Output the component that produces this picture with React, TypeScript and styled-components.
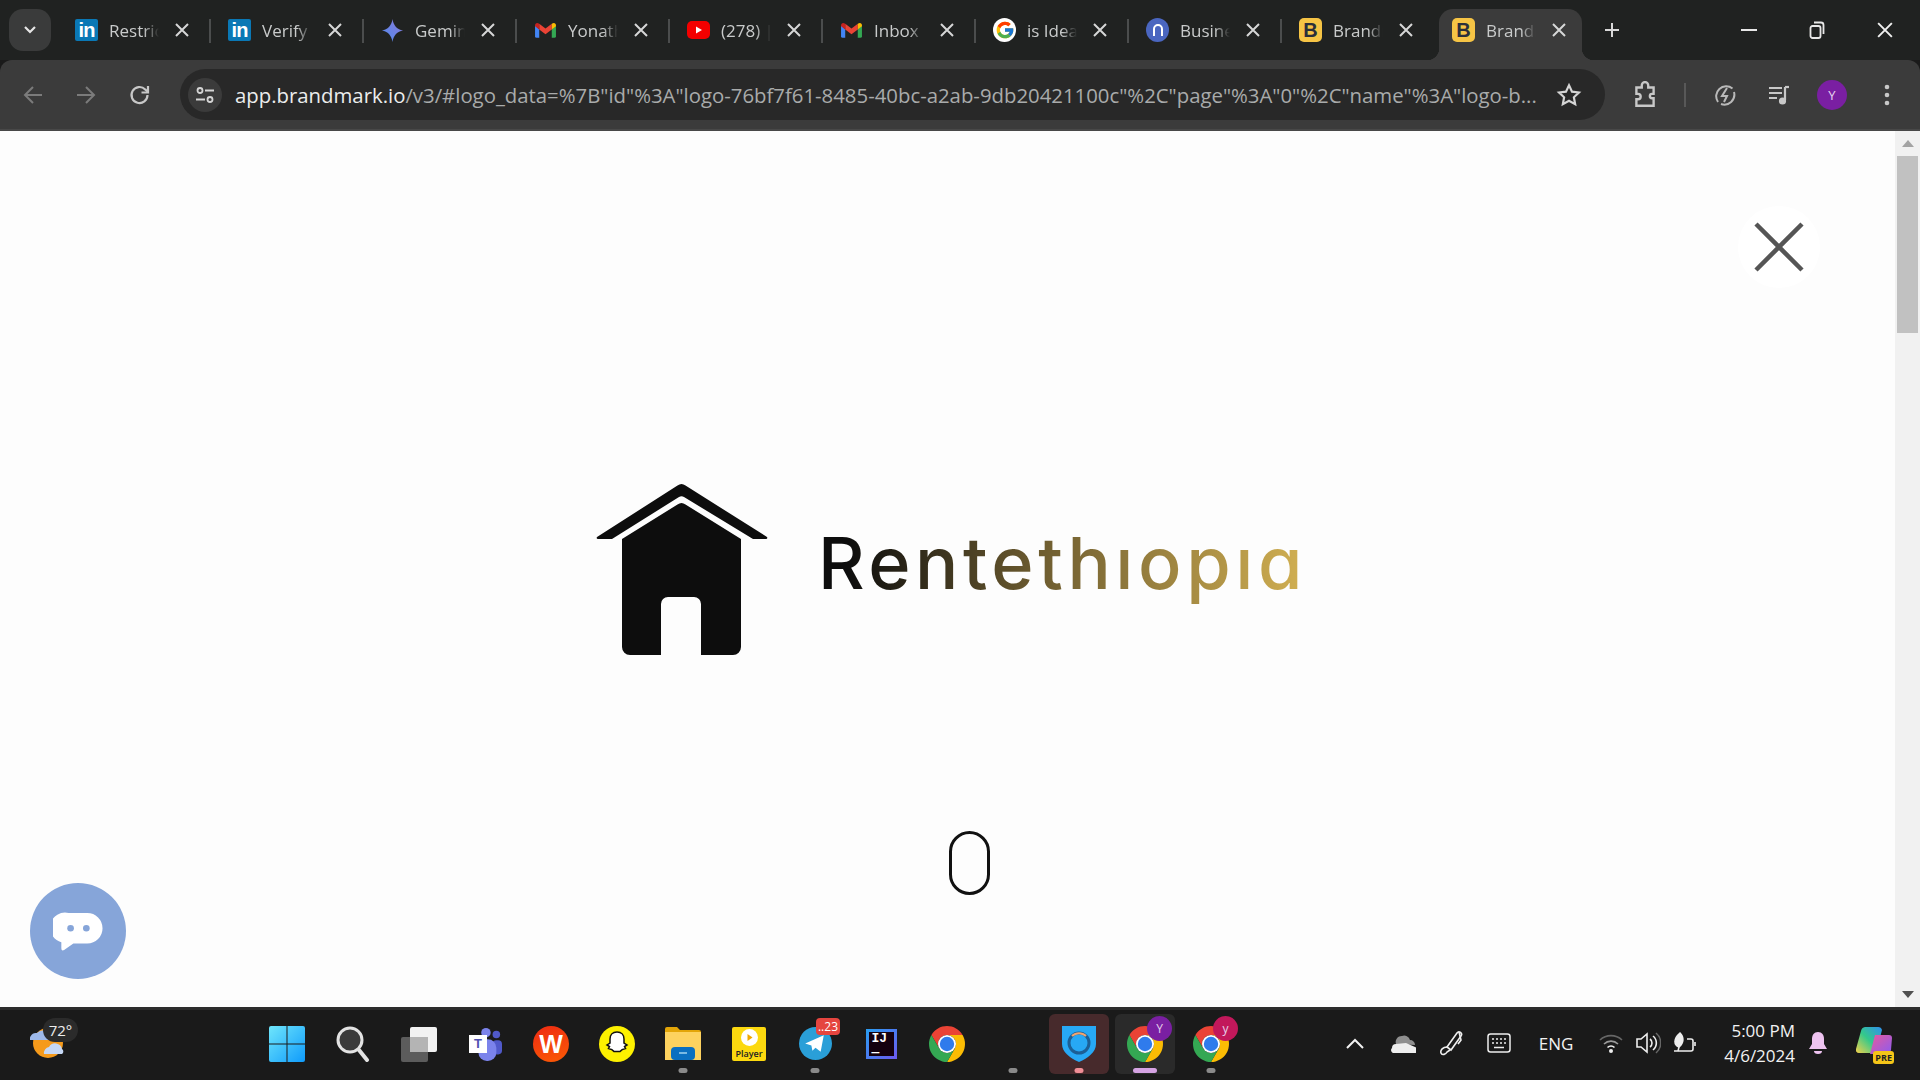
import React from 'react'
import styled, { createGlobalStyle } from 'styled-components'
import { FcGoogle } from 'react-icons/fc'

const GlobalStyle = createGlobalStyle`
  html, body {
    margin: 0;
    padding: 0;
    overflow: hidden;
    background: #1a1a1a;
  }
  * {
    box-sizing: border-box;
  }
`

const Screen = styled.div`
  width: 1920px;
  height: 1080px;
  display: flex;
  flex-direction: column;
  font-family: 'Open Sans', 'Noto Sans', sans-serif;
  overflow: hidden;
`

/* ---------- tab strip ---------- */

const TabStrip = styled.div`
  height: 60px;
  background: #202221;
  display: flex;
  align-items: flex-start;
  padding-left: 9px;
  flex: none;
`

const TabSearch = styled.div`
  width: 42px;
  height: 42px;
  margin: 9px 6px 0 0;
  border-radius: 14px;
  background: #3a3b3b;
  display: flex;
  align-items: center;
  justify-content: center;
  flex: none;
`

const Tab = styled.div<{ $active?: boolean; $divider?: boolean }>`
  position: relative;
  width: ${({ $active }) => ($active ? '143px' : '153px')};
  height: 51px;
  margin: 9px ${({ $active }) => ($active ? '5px' : '0')} 0 ${({ $active }) => ($active ? '5px' : '0')};
  padding: 0 0 9px ${({ $active }) => ($active ? '13px' : '18px')};
  display: flex;
  align-items: center;
  flex: none;
  color: #c9cbcb;
  font-size: 17px;
  border-radius: 14px 14px 0 0;
  background: ${({ $active }) => ($active ? '#3b3b3b' : 'transparent')};

  &::after {
    content: '';
    display: ${({ $divider }) => ($divider ? 'block' : 'none')};
    position: absolute;
    right: -1px;
    top: 10px;
    width: 2px;
    height: 24px;
    background: #4b4d4d;
  }

  ${({ $active }) =>
    $active
      ? `
    &::before {
      content: '';
      position: absolute;
      left: -12px;
      right: -12px;
      bottom: 0;
      height: 12px;
      background:
        radial-gradient(circle at 0 0, transparent 12px, #3b3b3b 12.5px) left bottom / 12px 12px no-repeat,
        radial-gradient(circle at 100% 0, transparent 12px, #3b3b3b 12.5px) right bottom / 12px 12px no-repeat;
    }
  `
      : ''}
`

const TabIcon = styled.span`
  width: 23px;
  height: 23px;
  flex: none;
  display: flex;
  align-items: center;
  justify-content: center;
  margin-right: 11px;
`

const TabTitle = styled.span`
  width: 50px;
  flex: none;
  overflow: hidden;
  white-space: nowrap;
  -webkit-mask-image: linear-gradient(90deg, #000 70%, transparent 100%);
  mask-image: linear-gradient(90deg, #000 70%, transparent 100%);
`

const TabClose = styled.span`
  width: 14px;
  height: 14px;
  margin-left: 16px;
  display: flex;
  flex: none;
`

const LinkedInMark = styled.span`
  width: 23px;
  height: 22px;
  background: #0a78b5;
  border-radius: 2px;
  color: #fff;
  font: bold 20px/22px 'Liberation Sans', sans-serif;
  text-align: center;
  letter-spacing: -1px;
`

const BrandMark = styled.span`
  width: 24px;
  height: 24px;
  border-radius: 5px;
  background: #f6c445;
  color: #2b2f3a;
  font: bold 20px/24px 'Liberation Sans', sans-serif;
  text-align: center;
`

const NotionMark = styled.span`
  width: 24px;
  height: 24px;
  border-radius: 50%;
  background: #4a66c0;
  display: flex;
  align-items: center;
  justify-content: center;
`

const GoogleMark = styled.span`
  width: 24px;
  height: 24px;
  border-radius: 50%;
  background: #fff;
  display: flex;
  align-items: center;
  justify-content: center;
`

const NewTab = styled.div`
  width: 30px;
  height: 30px;
  margin: 15px 0 0 10px;
  display: flex;
  align-items: center;
  justify-content: center;
  flex: none;
`

const WindowControls = styled.div`
  margin-left: auto;
  display: flex;
  height: 60px;
  align-items: center;
  padding-right: 1px;
`

const WindowButton = styled.div`
  width: 68px;
  height: 60px;
  display: flex;
  align-items: center;
  justify-content: center;
`

/* ---------- toolbar ---------- */

const Toolbar = styled.div`
  height: 71px;
  background: #3b3b3b;
  border-bottom: 2px solid #484848;
  border-radius: 12px 12px 0 0;
  display: flex;
  align-items: flex-start;
  padding: 9px 0 0 6px;
  flex: none;
`

const NavButton = styled.div<{ $w?: number }>`
  width: ${({ $w }) => $w ?? 53}px;
  height: 51px;
  display: flex;
  align-items: center;
  justify-content: center;
  flex: none;
`

const Omnibox = styled.div`
  width: 1425px;
  height: 51px;
  margin-left: 12px;
  border-radius: 26px;
  background: #282828;
  display: flex;
  align-items: center;
  padding: 0 23px 0 8px;
  flex: none;
`

const SiteInfo = styled.div`
  width: 34px;
  height: 34px;
  border-radius: 50%;
  background: #3b3b3b;
  display: flex;
  align-items: center;
  justify-content: center;
  flex: none;
  margin-right: 13px;
`

const Url = styled.div`
  flex: 1;
  min-width: 0;
  color: #a9abab;
  font-size: 20.35px;
  white-space: nowrap;
  overflow: hidden;

  b {
    font-weight: 400;
    color: #eceded;
  }
`

const ToolDivider = styled.div`
  width: 2px;
  height: 24px;
  margin-top: 14px;
  background: #585858;
  flex: none;
`

const Avatar = styled.div`
  width: 30px;
  height: 30px;
  border-radius: 50%;
  background: #7a1fa2;
  color: #e8d5f0;
  font-size: 13px;
  display: flex;
  align-items: center;
  justify-content: center;
`

/* ---------- page ---------- */

const Main = styled.div`
  flex: 1;
  min-height: 0;
  display: flex;
`

const Page = styled.div`
  position: relative;
  flex: 1;
  background: #fdfdfd;
  display: flex;
  flex-direction: column;
  align-items: center;
  padding-top: 353px;
`

const CloseButton = styled.div`
  position: absolute;
  top: 75px;
  right: 75px;
  width: 82px;
  height: 82px;
  border-radius: 50%;
  background: #fff;
  display: flex;
  align-items: center;
  justify-content: center;
`

const Logo = styled.div`
  display: flex;
  align-items: flex-start;
  gap: 50px;
  margin-left: 8px;
`

const Wordmark = styled.div`
  font-family: Inter, 'Open Sans', sans-serif;
  font-feature-settings: 'cv11' 1;
  font-weight: 500;
  font-size: 72px;
  line-height: 88px;
  letter-spacing: 4.6px;
  margin-top: 35px;
  white-space: nowrap;
  color: transparent;
  background: linear-gradient(90deg, #0d0d0d 0%, #0d0d0d 6%, #6d5c30 45%, #d2b052 100%);
  -webkit-background-clip: text;
  background-clip: text;
`

const ScrollHint = styled.div`
  width: 41px;
  height: 64px;
  margin: 175px 0 0 43px;
  border: 3.5px solid #111;
  border-radius: 21px;
`

const ChatBubble = styled.div`
  position: absolute;
  left: 30px;
  bottom: 28px;
  width: 96px;
  height: 96px;
  border-radius: 50%;
  background: #86a5d9;
  display: flex;
  align-items: center;
  justify-content: center;
`

const Scrollbar = styled.div`
  width: 25px;
  background: #f1f1f1;
  display: flex;
  flex-direction: column;
  align-items: center;
  flex: none;
`

const ScrollArrow = styled.div`
  height: 25px;
  display: flex;
  align-items: center;
  justify-content: center;
  flex: none;
`

const ScrollThumb = styled.div`
  width: 21px;
  height: 177px;
  background: #c1c1c1;
  flex: none;
`

const ScrollTrack = styled.div`
  flex: 1;
`

/* ---------- taskbar ---------- */

const Taskbar = styled.div`
  height: 73px;
  background: #1a1a1a;
  border-top: 3px solid #2d2d2d;
  display: flex;
  align-items: stretch;
  flex: none;
`

const WeatherSlot = styled.div`
  position: relative;
  width: 254px;
  padding: 13px 0 0 30px;
  flex: none;
`

const WeatherBadge = styled.span`
  position: absolute;
  left: 43px;
  top: 8px;
  width: 35px;
  height: 24px;
  border-radius: 12px;
  background: #2b2b2b;
  color: #eee;
  font-size: 15px;
  line-height: 24px;
  text-align: center;
`

const Apps = styled.div`
  display: flex;
  flex: none;
`

const AppSlot = styled.div<{ $bg?: string }>`
  position: relative;
  width: 66px;
  display: flex;
  align-items: center;
  justify-content: center;
  padding-bottom: 3px;

  &::before {
    content: '';
    display: ${({ $bg }) => ($bg ? 'block' : 'none')};
    position: absolute;
    left: 3px;
    right: 3px;
    top: 4px;
    bottom: 6px;
    border-radius: 6px;
    background: ${({ $bg }) => $bg};
  }

  > * {
    position: relative;
  }
`

const RunDot = styled.span<{ $color?: string; $wide?: boolean }>`
  position: absolute !important;
  bottom: 7px;
  left: 50%;
  transform: translateX(-50%);
  width: ${({ $wide }) => ($wide ? '24px' : '9px')};
  height: 5px;
  border-radius: 3px;
  background: ${({ $color }) => $color ?? '#8a8a8a'};
`

const Badge = styled.span<{ $color: string }>`
  position: absolute !important;
  top: 6px;
  right: 6px;
  width: 25px;
  height: 25px;
  border-radius: 50%;
  background: ${({ $color }) => $color};
  color: #e6d0ea;
  font-size: 12px;
  line-height: 25px;
  text-align: center;
`

const CountBadge = styled.span`
  position: absolute !important;
  top: 8px;
  right: 8px;
  height: 17px;
  padding: 0 2px;
  border-radius: 4px;
  background: #e5453f;
  color: #fff;
  font-size: 12px;
  line-height: 17px;
`

const Wps = styled.span`
  width: 36px;
  height: 36px;
  border-radius: 50%;
  background: linear-gradient(160deg, #ee2a12, #fb5b05);
  color: #fff;
  font: 900 25px/36px 'Liberation Sans', sans-serif;
  text-align: center;
`

const PlayerTile = styled.span`
  width: 34px;
  height: 34px;
  border-radius: 2px;
  background: #fcd90f;
  color: #222;
  font-size: 9px;
  font-weight: 600;
  display: flex;
  flex-direction: column;
  align-items: center;
  justify-content: flex-end;
  padding-bottom: 1px;
  gap: 1px;
`

const IdeaTile = styled.span`
  width: 31px;
  height: 30px;
  border: 3px solid;
  border-image: linear-gradient(135deg, #2b9bf0, #6a5cf0) 1;
  background: #14000f;
  color: #fff;
  font: bold 13px/14px 'Liberation Mono', monospace;
  padding-left: 3px;
`

const TeamsTag = styled.span`
  position: absolute !important;
  left: 17px;
  top: 25px;
  width: 18px;
  height: 18px;
  background: #fff;
  color: #4f52b2;
  font: bold 13px/18px 'Liberation Sans', sans-serif;
  text-align: center;
`

const Spacer = styled.div`
  flex: 1;
`

const Tray = styled.div`
  display: flex;
  align-items: stretch;
  padding-right: 13px;
  flex: none;
`

const TrayItem = styled.div<{ $w: number }>`
  width: ${({ $w }) => $w}px;
  display: flex;
  align-items: center;
  justify-content: center;
  color: #f2f2f2;
  font-size: 17px;
  flex: none;
  padding-bottom: 4px;
`

const Clock = styled.div`
  width: 91px;
  display: flex;
  flex-direction: column;
  align-items: flex-end;
  justify-content: center;
  color: #f2f2f2;
  font-size: 17px;
  line-height: 25px;
  padding-bottom: 4px;
  white-space: nowrap;
  flex: none;
`

const CopilotWrap = styled.div`
  position: relative;
  width: 36px;
  height: 36px;
`

const PreTag = styled.span`
  position: absolute;
  right: -2px;
  bottom: -3px;
  height: 13px;
  padding: 0 2px;
  border-radius: 3px;
  background: #f5c518;
  color: #222;
  font-size: 9px;
  font-weight: 700;
  line-height: 13px;
`

/* ---------- drawings ---------- */

const XIcon = ({ size = 14, color = '#d6d7d7', width = 2 }: { size?: number; color?: string; width?: number }) => (
  <svg width={size} height={size} viewBox="0 0 14 14">
    <path d="M1 1l12 12M13 1L1 13" stroke={color} strokeWidth={width} fill="none" />
  </svg>
)

const Gmail = ({ size = 23 }: { size?: number }) => (
  <svg width={size} height={size} viewBox="1 3 22 18" preserveAspectRatio="xMidYMid meet">
    <path d="M2 7v10.5A1.5 1.5 0 0 0 3.5 19H6v-8z" fill="#4285f4" />
    <path d="M22 7v10.5a1.5 1.5 0 0 1-1.5 1.5H18v-8z" fill="#34a853" />
    <path d="M6 11V5.500L12 10l6-4.500V11l-6 4.500z" fill="#ea4335" />
    <path d="M2 7a2.200 2.200 0 0 1 3.500-1.800L6 5.500V11L2 8z" fill="#c5221f" />
    <path d="M22 7a2.200 2.200 0 0 0-3.500-1.800L18 5.500V11l4-3z" fill="#fbbc04" />
  </svg>
)

const Gemini = () => (
  <svg width={23} height={23} viewBox="0 0 24 24">
    <defs>
      <linearGradient id="gem" x1="0" y1="1" x2="1" y2="0">
        <stop offset="0" stopColor="#4f8df0" />
        <stop offset="1" stopColor="#8b78d8" />
      </linearGradient>
    </defs>
    <path d="M12 0c1 7 5 11 11 12-6 1-10 5-11 12-1-7-5-11-11-12 6-1 10-5 11-12z" fill="url(#gem)" />
  </svg>
)

const YouTube = () => (
  <svg width={23} height={18} viewBox="0 0 23 18">
    <rect width="23" height="18" rx="5" fill="#f40000" />
    <path d="M9 5.500l6 3.500-6 3.500z" fill="#fff" />
  </svg>
)

const Chrome = ({ size = 36 }: { size?: number }) => (
  <svg width={size} height={size} viewBox="4 4 40 40">
    <path d="M6.680 14A20 20 0 0 1 41.320 14H24A10 10 0 0 0 15.340 29Z" fill="#ea4335" />
    <path d="M41.320 14A20 20 0 0 1 24 44L32.660 29A10 10 0 0 0 24 14Z" fill="#fbbc04" />
    <path d="M24 44A20 20 0 0 1 6.680 14L15.340 29A10 10 0 0 0 32.660 29Z" fill="#34a853" />
    <circle cx="24" cy="24" r="10" fill="#fff" />
    <circle cx="24" cy="24" r="8" fill="#2f7bec" />
  </svg>
)

const tabs = [
  { icon: <LinkedInMark>in</LinkedInMark>, title: 'Restrictions' },
  { icon: <LinkedInMark>in</LinkedInMark>, title: 'Verify' },
  { icon: <Gemini />, title: 'Gemini' },
  { icon: <Gmail />, title: 'Yonathan' },
  { icon: <YouTube />, title: '(278) | YouTube' },
  { icon: <Gmail />, title: 'Inbox' },
  { icon: <GoogleMark><FcGoogle size={20} /></GoogleMark>, title: 'is Ideal' },
  {
    icon: (
      <NotionMark>
        <svg width={12} height={14} viewBox="0 0 12 14">
          <path d="M2 13V6a4 4 0 0 1 8 0v7" stroke="#fff" strokeWidth="2" fill="none" />
        </svg>
      </NotionMark>
    ),
    title: 'Business'
  },
  { icon: <BrandMark>B</BrandMark>, title: 'Brandmark' }
]

const App = () => (
  <Screen>
    <GlobalStyle />
    <TabStrip>
      <TabSearch>
        <svg width={14} height={10} viewBox="0 0 14 10">
          <path d="M2 2l5 5 5-5" stroke="#e6e6e6" strokeWidth="2.200" fill="none" />
        </svg>
      </TabSearch>
      {tabs.map((tab, i) => (
        <Tab key={i} $divider={i < tabs.length - 1}>
          <TabIcon>{tab.icon}</TabIcon>
          <TabTitle>{tab.title}</TabTitle>
          <TabClose><XIcon /></TabClose>
        </Tab>
      ))}
      <Tab $active>
        <TabIcon><BrandMark>B</BrandMark></TabIcon>
        <TabTitle>Brandmark</TabTitle>
        <TabClose><XIcon /></TabClose>
      </Tab>
      <NewTab>
        <svg width={16} height={16} viewBox="0 0 16 16">
          <path d="M8 1v14M1 8h14" stroke="#d9d9d9" strokeWidth="2" />
        </svg>
      </NewTab>
      <WindowControls>
        <WindowButton>
          <svg width={16} height={4} viewBox="0 0 16 4"><path d="M0 2h16" stroke="#e8e8e8" strokeWidth="2" /></svg>
        </WindowButton>
        <WindowButton>
          <svg width={16} height={18} viewBox="0 0 16 18" fill="none" stroke="#e8e8e8" strokeWidth="1.800">
            <rect x="1.500" y="5" width="10" height="12" rx="2" />
            <path d="M5 1.500h7a2.500 2.500 0 0 1 2.500 2.500V13" />
          </svg>
        </WindowButton>
        <WindowButton><XIcon size={16} color="#f0f0f0" width={1.7} /></WindowButton>
      </WindowControls>
    </TabStrip>

    <Toolbar>
      <NavButton>
        <svg width={22} height={22} viewBox="0 0 22 22" fill="none" stroke="#7b7b7b" strokeWidth="2">
          <path d="M20 11H3M11 3l-8 8 8 8" />
        </svg>
      </NavButton>
      <NavButton>
        <svg width={22} height={22} viewBox="0 0 22 22" fill="none" stroke="#7b7b7b" strokeWidth="2">
          <path d="M2 11h17M11 3l8 8-8 8" />
        </svg>
      </NavButton>
      <NavButton $w={56}>
        <svg width={24} height={24} viewBox="0 0 24 24" fill="none" stroke="#c8c8c8" strokeWidth="2.200">
          <path d="M19.500 12a8 8 0 1 1-2.300-5.600L20 9" />
          <path d="M20 3v6.500h-6.500" />
        </svg>
      </NavButton>
      <Omnibox>
        <SiteInfo>
          <svg width={20} height={18} viewBox="0 0 20 18" fill="none" stroke="#d5d5d5" strokeWidth="1.800">
            <circle cx="5" cy="4.500" r="2.500" />
            <path d="M10 4.500h9M1 13.500h9" />
            <circle cx="15" cy="13.500" r="2.500" />
          </svg>
        </SiteInfo>
        <Url>
          <b>app.brandmark.io</b>/v3/#logo_data=%7B"id"%3A"logo-76bf7f61-8485-40bc-a2ab-9db20421100c"%2C"page"%3A"0"%2C"name"%3A"logo-b...
        </Url>
        <svg width={26} height={26} viewBox="0 0 24 24" fill="none" stroke="#d5d5d5" strokeWidth="2" style={{ flex: 'none' }}>
          <path d="M12 3l2.800 5.900 6.400.8-4.700 4.400 1.200 6.400-5.700-3.100-5.700 3.100 1.200-6.400-4.700-4.400 6.400-.8z" />
        </svg>
      </Omnibox>
      <NavButton $w={79}>
        <svg width={26} height={28} viewBox="0 0 24 26" fill="none" stroke="#c8c8c8" strokeWidth="2.200">
          <path d="M4 6h5V4a3 3 0 0 1 6 0v2h5v6h-1.500a2 2 0 0 0 0 4H20v7H4v-6h1.500a2.500 2.500 0 0 0 0-5H4z" />
        </svg>
      </NavButton>
      <ToolDivider />
      <NavButton $w={78}>
        <svg width={24} height={24} viewBox="0 0 24 24" fill="none" stroke="#b9b9b9" strokeWidth="2">
          <path d="M5 19A10 10 0 0 1 19.500 5.500M21 9a10 10 0 0 1-13 12" />
          <path d="M14 5l-5 8h5l-3 6" />
        </svg>
      </NavButton>
      <NavButton $w={30}>
        <svg width={24} height={24} viewBox="0 0 24 24" fill="none" stroke="#c8c8c8" strokeWidth="2.200">
          <path d="M2 5h13M2 10h13M2 15h8M18 4v13" />
          <circle cx="15.500" cy="18" r="2.500" fill="#c8c8c8" />
          <path d="M18 4h4" />
        </svg>
      </NavButton>
      <NavButton $w={76}><Avatar>Y</Avatar></NavButton>
      <NavButton $w={34}>
        <svg width={6} height={22} viewBox="0 0 6 22" fill="#c8c8c8">
          <circle cx="3" cy="3" r="2.300" />
          <circle cx="3" cy="11" r="2.300" />
          <circle cx="3" cy="19" r="2.300" />
        </svg>
      </NavButton>
    </Toolbar>

    <Main>
      <Page>
        <CloseButton>
          <svg width={50} height={50} viewBox="0 0 50 50">
            <path d="M2 2l46 46M48 2L2 48" stroke="#555" strokeWidth="4.500" />
          </svg>
        </CloseButton>
        <Logo>
          <svg width={172} height={172} viewBox="0 0 172 172">
            <path d="M85.500 0q2 0 4 1.500L171 53q1 1.500-1 2h-13L88 13q-2.500-1.500-5 0L16 55H2q-2-.5-1-2L81.500 1.500q2-1.500 4-1.500z" fill="#0d0d0d" />
            <path d="M85.500 19q2 0 4 1.500L145 55v108a8 8 0 0 1-8 8h-32v-51a7 7 0 0 0-7-7H72a7 7 0 0 0-7 7v51H34a8 8 0 0 1-8-8V55L81.500 20.500q2-1.500 4-1.500z" fill="#0d0d0d" />
          </svg>
          <Wordmark>Rentethıopıa</Wordmark>
        </Logo>
        <ScrollHint />
        <ChatBubble>
          <svg width={50} height={41} viewBox="0 0 54 44">
            <path d="M17 2h20a16 16 0 0 1 0 33H22L12 42q-3 1.500-3-2v-6.500A16 16 0 0 1 17 2z" fill="#fff" />
            <circle cx="19" cy="18.500" r="3.600" fill="#86a5d9" />
            <circle cx="36" cy="18.500" r="3.600" fill="#86a5d9" />
          </svg>
        </ChatBubble>
      </Page>
      <Scrollbar>
        <ScrollArrow>
          <svg width={12} height={7} viewBox="0 0 12 7"><path d="M6 0l6 7H0z" fill="#a3a3a3" /></svg>
        </ScrollArrow>
        <ScrollThumb />
        <ScrollTrack />
        <ScrollArrow>
          <svg width={12} height={7} viewBox="0 0 12 7"><path d="M0 0h12L6 7z" fill="#505050" /></svg>
        </ScrollArrow>
      </Scrollbar>
    </Main>

    <Taskbar>
      <WeatherSlot>
        <svg width={36} height={38} viewBox="0 0 36 38">
          <circle cx="18" cy="20" r="15" fill="#f59a1b" />
          <path d="M0 17a6 6 0 0 1 7-7 7 7 0 0 1 12 2v5z" fill="#9db8e8" />
          <path d="M14 31a6 6 0 0 1 5-7 7 7 0 0 1 13 2 3 3 0 0 1 0 5z" fill="#c6d8f5" />
        </svg>
        <WeatherBadge>72°</WeatherBadge>
      </WeatherSlot>
      <Apps>
        <AppSlot>
          <svg width={36} height={36} viewBox="0 0 36 36">
            <defs>
              <linearGradient id="win" x1="0" y1="0" x2="1" y2="1">
                <stop offset="0" stopColor="#6fe6fb" />
                <stop offset="1" stopColor="#0f9bfb" />
              </linearGradient>
            </defs>
            <path d="M2 0h15.500v17.500H0V2a2 2 0 0 1 2-2zM18.500 0H34a2 2 0 0 1 2 2v15.500H18.500zM0 18.500h17.500V36H2a2 2 0 0 1-2-2zM18.500 18.500H36V34a2 2 0 0 1-2 2H18.500z" fill="url(#win)" />
          </svg>
        </AppSlot>
        <AppSlot>
          <svg width={34} height={36} viewBox="0 0 34 36" fill="none">
            <circle cx="14" cy="14" r="12" fill="#3b3b3b" stroke="#e3e3e3" strokeWidth="3" />
            <path d="M23 24l8 10" stroke="#e3e3e3" strokeWidth="4" strokeLinecap="round" />
          </svg>
        </AppSlot>
        <AppSlot>
          <svg width={36} height={36} viewBox="0 0 36 36">
            <rect x="0" y="11" width="27" height="25" rx="2" fill="#5c5c5c" />
            <rect x="9" y="1" width="27" height="25" rx="2" fill="#f2f2f2" />
            <rect x="9" y="11" width="18" height="15" fill="#b4b4b4" />
          </svg>
        </AppSlot>
        <AppSlot>
          <svg width={36} height={34} viewBox="0 0 36 36">
            <circle cx="19" cy="6" r="5" fill="#7b83eb" />
            <circle cx="30" cy="8" r="4" fill="#5059c9" />
            <rect x="26" y="14" width="10" height="15" rx="4" fill="#5059c9" />
            <rect x="11" y="13" width="19" height="23" rx="9" fill="#7b83eb" />
          </svg>
          <TeamsTag>T</TeamsTag>
        </AppSlot>
        <AppSlot><Wps>W</Wps></AppSlot>
        <AppSlot>
          <svg width={36} height={36} viewBox="0 0 36 36">
            <circle cx="18" cy="18" r="18" fill="#fdf100" />
            <path d="M18 6c4.500 0 7 3 7 7v4l3 2-2.500 1.500 1 2c-3 .5-4.500 1.500-5.500 3h-6c-1-1.500-2.500-2.500-5.500-3l1-2L8 19l3-2v-4c0-4 2.500-7 7-7z" fill="#fff" stroke="#111" strokeWidth="1.500" />
          </svg>
        </AppSlot>
        <AppSlot>
          <svg width={36} height={33} viewBox="0 0 36 33">
            <path d="M0 2a2 2 0 0 1 2-2h10l3 3h19a2 2 0 0 1 2 2v28H0z" fill="#e3a508" />
            <path d="M0 5h36v28H0z" fill="#fdd25f" />
            <rect x="6" y="20" width="24" height="13" rx="4" fill="#0a6fc0" />
            <path d="M14 26h8" stroke="#9fd2ef" strokeWidth="1.500" />
          </svg>
          <RunDot />
        </AppSlot>
        <AppSlot>
          <PlayerTile>
            <svg width={17} height={17} viewBox="0 0 17 17">
              <circle cx="8.500" cy="8.500" r="8.500" fill="#fff" />
              <path d="M6.500 5l5 3.500-5 3.500z" fill="#f0a800" />
            </svg>
            Player
          </PlayerTile>
        </AppSlot>
        <AppSlot>
          <svg width={33} height={33} viewBox="0 0 32 32">
            <circle cx="16" cy="16" r="16" fill="#2a9fd8" />
            <path d="M6 16l18-8-3 16-5-4-3 3-1-5z" fill="#fff" />
          </svg>
          <CountBadge>..23</CountBadge>
          <RunDot />
        </AppSlot>
        <AppSlot><IdeaTile>IJ<br />—</IdeaTile></AppSlot>
        <AppSlot><Chrome /></AppSlot>
        <AppSlot><RunDot /></AppSlot>
        <AppSlot $bg="#472a2c">
          <svg width={34} height={36} viewBox="0 0 34 36">
            <path d="M0 0h34v18c0 8-8 14-17 18C8 32 0 26 0 18z" fill="#27a8f5" />
            <circle cx="17" cy="17" r="10" fill="none" stroke="#1c5f96" strokeWidth="3" />
            <path d="M10 10a10 10 0 0 1 14 0" fill="none" stroke="#f1a470" strokeWidth="2" />
          </svg>
          <RunDot $color="#f08e96" />
        </AppSlot>
        <AppSlot $bg="#2a2a2a">
          <Chrome />
          <Badge $color="#7a1fa2">Y</Badge>
          <RunDot $color="#d5a3e3" $wide />
        </AppSlot>
        <AppSlot>
          <Chrome />
          <Badge $color="#c2185b">y</Badge>
          <RunDot />
        </AppSlot>
      </Apps>
      <Spacer />
      <Tray>
        <TrayItem $w={48}>
          <svg width={18} height={11} viewBox="0 0 18 11"><path d="M1 10l8-8 8 8" stroke="#f2f2f2" strokeWidth="2" fill="none" /></svg>
        </TrayItem>
        <TrayItem $w={48}>
          <svg width={25} height={20} viewBox="0 0 25 20">
            <path d="M5 11a6 6 0 0 1 6-8 6 6 0 0 1 8 4 5 5 0 0 1 5 5z" fill="#8f8f8f" />
            <path d="M1 15a4 4 0 0 1 4-4l10-1 9 4a3 3 0 0 1-2 6H4a3 3 0 0 1-3-5z" fill="#eee" />
          </svg>
        </TrayItem>
        <TrayItem $w={48}>
          <svg width={24} height={26} viewBox="0 0 24 26" fill="none" stroke="#eee" strokeWidth="1.600">
            <path d="M8 17L18 3a2.500 2.500 0 0 1 4 3L12 20z" />
            <path d="M8 17c-4 0-7 3-6 6s5 1 6-1l3-2M20 2l2 8-3 4" />
          </svg>
        </TrayItem>
        <TrayItem $w={48}>
          <svg width={24} height={20} viewBox="0 0 24 20" fill="none" stroke="#eee" strokeWidth="1.500">
            <rect x="1" y="1" width="22" height="18" rx="2.500" />
            <path d="M5 6h2M9 6h2M13 6h2M17 6h2M5 10h2M9 10h2M13 10h2M17 10h2M7 14.500h10" />
          </svg>
        </TrayItem>
        <TrayItem $w={66}>ENG</TrayItem>
        <TrayItem $w={43}>
          <svg width={24} height={22} viewBox="0 0 24 22" fill="none" strokeWidth="1.600">
            <path d="M1 8a16 16 0 0 1 22 0" stroke="#666" />
            <path d="M5 12a10 10 0 0 1 14 0" stroke="#999" />
            <path d="M8.500 15.500a5 5 0 0 1 7 0" stroke="#eee" />
            <circle cx="12" cy="19" r="2" fill="#eee" />
          </svg>
        </TrayItem>
        <TrayItem $w={32}>
          <svg width={25} height={24} viewBox="0 0 25 24" fill="none" stroke="#eee" strokeWidth="1.600">
            <path d="M1 8h4l6-5v18l-6-5H1z" />
            <path d="M14 8a5 5 0 0 1 0 8M17 5a9 9 0 0 1 0 14" />
            <path d="M20 2a13 13 0 0 1 0 20" stroke="#666" />
          </svg>
        </TrayItem>
        <TrayItem $w={40}>
          <svg width={26} height={24} viewBox="0 0 26 24" fill="none" stroke="#eee" strokeWidth="1.600">
            <path d="M3 20h17a2 2 0 0 0 2-2V10a2 2 0 0 0-2-2h-4M24 11v4" />
            <path d="M8 16C3 14 2 8 9 2c4 4 4 10-1 14z" fill="#eee" />
            <path d="M8 16l-1 4" />
          </svg>
        </TrayItem>
        <Clock>
          <span>5:00 PM</span>
          <span>4/6/2024</span>
        </Clock>
        <TrayItem $w={46}>
          <svg width={20} height={24} viewBox="0 0 20 24" fill="#eec3f0">
            <path d="M10 1c4 0 6 3 6 7v5l3 5H1l3-5V8c0-4 2-7 6-7z" />
            <path d="M6 20h8a4 3 0 0 1-8 0z" />
          </svg>
        </TrayItem>
        <TrayItem $w={66}>
          <CopilotWrap>
            <svg width={36} height={32} viewBox="0 0 36 32">
              <defs>
                <linearGradient id="copA" x1="0" y1="1" x2="1" y2="0">
                  <stop offset="0" stopColor="#f5d14a" />
                  <stop offset="0.500" stopColor="#34c98a" />
                  <stop offset="1" stopColor="#2f8ff0" />
                </linearGradient>
                <linearGradient id="copB" x1="0" y1="0" x2="1" y2="1">
                  <stop offset="0" stopColor="#e85a9c" />
                  <stop offset="1" stopColor="#8b5cf0" />
                </linearGradient>
              </defs>
              <path d="M9 2h13a4 4 0 0 1 4 3L20 28H3a3 3 0 0 1-3-4L5 6a5 5 0 0 1 4-4z" fill="url(#copA)" />
              <path d="M19 10h14a3 3 0 0 1 3 3l-1 12a5 5 0 0 1-5 4H14z" fill="url(#copB)" />
            </svg>
            <PreTag>PRE</PreTag>
          </CopilotWrap>
        </TrayItem>
      </Tray>
    </Taskbar>
  </Screen>
)

export default App
